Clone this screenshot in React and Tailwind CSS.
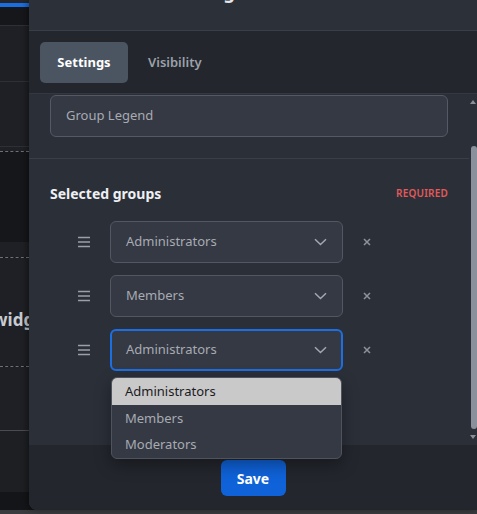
import React from "react";

const font = { fontFamily: '"Noto Sans", "Open Sans", sans-serif' };

function Handle() {
  return (
    <svg width="12" height="12" viewBox="0 0 12 12" className="shrink-0">
      <path d="M0 1.5H12M0 6H12M0 10.5H12" stroke="#9aa0a8" strokeWidth="1.6" />
    </svg>
  );
}

function Chevron() {
  return (
    <svg width="13" height="8" viewBox="0 0 13 8" className="shrink-0">
      <path d="M1 1.2L6.5 6.5L12 1.2" fill="none" stroke="#a3a8b0" strokeWidth="1.5" />
    </svg>
  );
}

function Cross() {
  return (
    <svg width="8" height="8" viewBox="0 0 8 8" className="shrink-0">
      <path d="M1 1L7 7M7 1L1 7" stroke="#8e939b" strokeWidth="1.5" />
    </svg>
  );
}

function Row({ label, focused, children }) {
  return (
    <div className="flex items-center h-[42px] pl-[28px]">
      <Handle />
      <div className="relative ml-[20px] w-[233px] h-[42px]">
        <div
          className={
            focused
              ? "flex items-center justify-between h-full rounded-[6px] border-2 border-[#1c6fe3] bg-[#353944] pl-[14px] pr-[14px]"
              : "flex items-center justify-between h-full rounded-[6px] border border-[#525762] bg-[#353944] pl-[15px] pr-[15px]"
          }
        >
          <span className="text-[13px] text-[#a7abb2]">{label}</span>
          <Chevron />
        </div>
        {children}
      </div>
      <div className="ml-[20px] w-[8px] flex items-center">
        <Cross />
      </div>
    </div>
  );
}

export default function App() {
  return (
    <div className="w-[477px] h-[514px] overflow-hidden flex flex-col bg-[#141518]" style={font}>
      <div className="flex h-[510px]">
        {/* background app strip */}
        <div className="w-[29px] shrink-0 flex flex-col overflow-hidden">
          <div className="h-[3px] bg-[#24262b]" />
          <div className="h-[4px] bg-[#1a6fe0]" />
          <div className="h-[18px] bg-[#16171b]" />
          <div className="h-[1px] bg-[#2e3035]" />
          <div className="h-[55px] bg-[#1e2025]" />
          <div className="h-[1px] bg-[#2e3035]" />
          <div className="h-[64px] bg-[#1e2025]" />
          <div className="h-[1px] bg-[#2e3035]" />
          <div className="h-[4px] bg-[#1e2025]" />
          <div className="h-[1px] border-t border-dashed border-[#6d7076]" />
          <div className="h-[90px] bg-[#16171a]" />
          <div className="h-[15px] bg-[#1e2025]" />
          <div className="h-[1px] border-t border-dashed border-[#6d7076]" />
          <div className="h-[108px] bg-[#1e2025] flex flex-col justify-center pt-[16px]">
            <span className="whitespace-nowrap -ml-[7px] text-[17px] font-bold text-[#c8cbd0] leading-[24px]">widget</span>
          </div>
          <div className="h-[1px] border-t border-dashed border-[#6d7076]" />
          <div className="h-[63px] bg-[#1e2025]" />
          <div className="h-[1px] bg-[#4a4c51]" />
          <div className="h-[61px] bg-[#1d1f23]" />
          <div className="flex-1 bg-[#141518]" />
        </div>

        {/* modal */}
        <div className="flex-1 flex flex-col rounded-bl-[8px] overflow-hidden bg-[#2b2f38] shadow-[-2px_0_6px_rgba(0,0,0,0.4)] relative">
          <div className="h-[31px] shrink-0 bg-[#2c3038] border-b border-[#3a3e47] overflow-hidden">
            <div className="-mt-[22px] pl-[123px] text-[18px] font-bold text-[#e5e7eb] leading-[28px] whitespace-nowrap">
              Edit widget
            </div>
          </div>
          <div className="h-[63px] shrink-0 bg-[#23262d] border-b border-[#34373f] flex items-start pt-[11px] pl-[11px]">
            <div className="h-[41px] w-[88px] rounded-[5px] bg-[#4b5461] flex items-center justify-center text-[13px] font-bold text-white">
              Settings
            </div>
            <div className="h-[41px] ml-[20px] flex items-center text-[13px] font-semibold text-[#9ca1a9]">
              Visibility
            </div>
          </div>

          <div className="h-[351px] shrink-0 flex relative z-10">
            <div className="flex-1 flex flex-col pt-[1px]">
              <div className="px-[21px]">
                <div className="h-[42px] rounded-[6px] border border-[#545965] bg-[#353944] flex items-center pl-[15px] text-[13px] text-[#a7abb2]">
                  Group Legend
                </div>
              </div>
              <div className="mt-[21px] h-[1px] bg-[#3a3e48]" />
              <div className="px-[21px] pt-[24px]">
                <div className="flex items-center justify-between h-[20px]">
                  <span className="text-[14px] font-bold text-[#eef0f3]">Selected groups</span>
                  <span className="text-[10px] font-semibold tracking-[0.2px] text-[#e25a5a]">REQUIRED</span>
                </div>
                <div className="mt-[18px] flex flex-col gap-[12px]">
                  <Row label="Administrators" />
                  <Row label="Members" />
                  <Row label="Administrators" focused>
                    <div className="absolute left-[1px] top-[48px] w-[231px] rounded-[6px] border border-[#4f535d] bg-[#353944] overflow-hidden shadow-[0_6px_16px_rgba(0,0,0,0.35)] z-20">
                      <div className="h-[27px] bg-[#c9c9c9] flex items-center pl-[13px] text-[13px] text-[#1b1b1f]">Administrators</div>
                      <div className="h-[27px] flex items-center pl-[13px] text-[13px] text-[#a7abb2]">Members</div>
                      <div className="h-[26px] flex items-center pl-[13px] text-[13px] text-[#a7abb2]">Moderators</div>
                    </div>
                  </Row>
                </div>
              </div>
            </div>
            {/* scrollbar */}
            <div className="w-[8px] shrink-0 flex flex-col items-center">
              <div className="mt-[6px] w-0 h-0 border-l-[3px] border-r-[3px] border-b-[4px] border-l-transparent border-r-transparent border-b-[#8a909a]" />
              <div className="mt-[42px] w-[6px] h-[283px] rounded-[3px] bg-[#8b919c] ml-[1px]" />
              <div className="mt-[6px] w-0 h-0 border-l-[3px] border-r-[3px] border-t-[4px] border-l-transparent border-r-transparent border-t-[#8a909a]" />
            </div>
          </div>

          <div className="flex-1 bg-[#23262d] flex justify-center pt-[15px]">
            <button className="h-[36px] w-[65px] rounded-[6px] bg-[#0f62d8] text-[14px] font-bold text-white">
              Save
            </button>
          </div>
        </div>
      </div>
      <div className="h-[4px] bg-[#3a3b3e]" />
    </div>
  );
}
